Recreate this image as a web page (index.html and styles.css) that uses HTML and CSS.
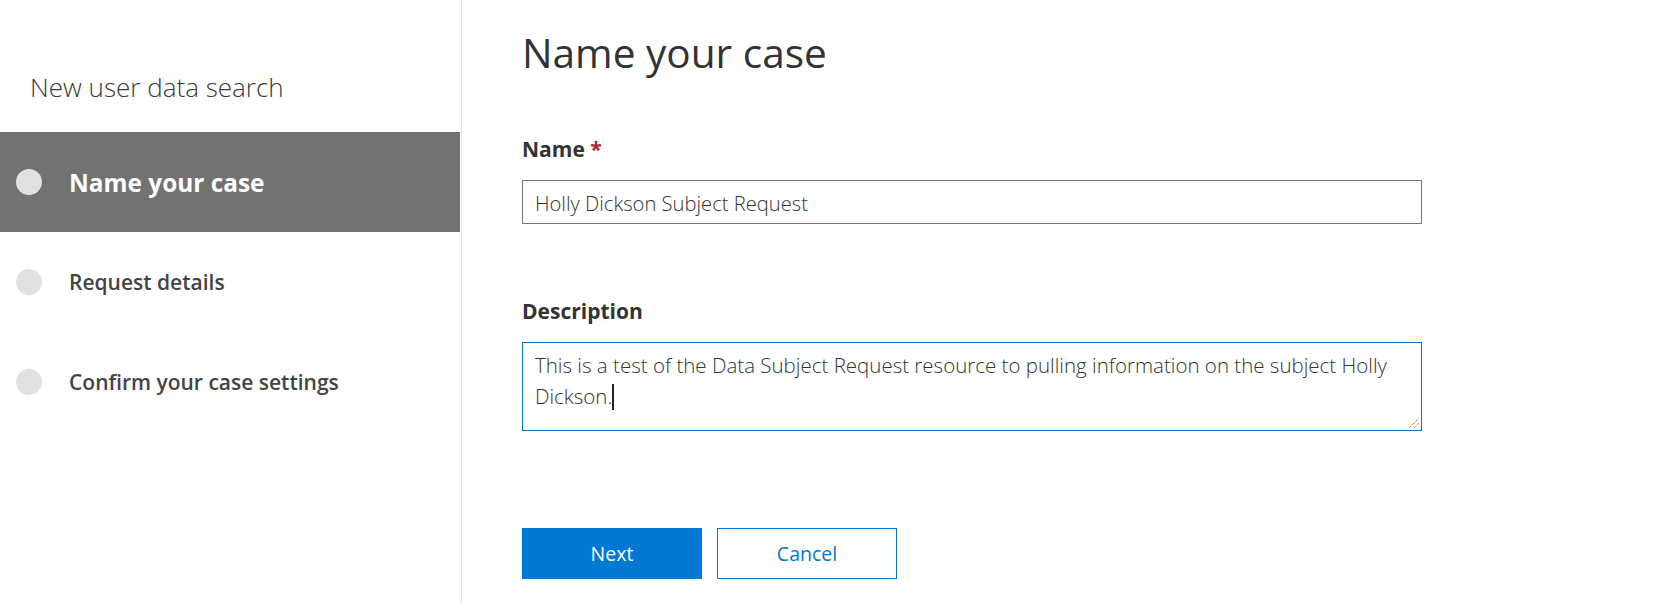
FILE: index.html
```html
<!DOCTYPE html>
<html lang="en">
<head>
<meta charset="utf-8">
<title>New user data search</title>
<link rel="stylesheet" href="styles.css">
</head>
<body>
<div class="page">
  <aside class="sidebar">
    <div class="sidebar-title">New user data search</div>
    <ul class="steps">
      <li class="step step-active"><span class="dot"></span><span class="step-label">Name your case</span></li>
      <li class="step"><span class="dot"></span><span class="step-label">Request details</span></li>
      <li class="step"><span class="dot"></span><span class="step-label">Confirm your case settings</span></li>
    </ul>
  </aside>
  <main class="main">
    <h1 class="heading">Name your case</h1>
    <div class="field field-name">
      <label class="label" for="case-name">Name <span class="req">*</span></label>
      <input class="text-input" id="case-name" type="text" value="Holly Dickson Subject Request">
    </div>
    <div class="field field-desc">
      <div class="label">Description</div>
      <div class="textarea" role="textbox" aria-multiline="true">This is a test of the Data Subject Request resource to pulling information on the subject Holly Dickson.<span class="caret"></span>
        <svg class="grip" width="12" height="12" viewBox="0 0 12 12"><path d="M1 11 L11 1 M6 11 L11 6" stroke="#555" stroke-width="1" stroke-dasharray="1 1" fill="none"/></svg>
      </div>
    </div>
    <div class="actions">
      <button class="btn btn-primary" type="button">Next</button>
      <button class="btn btn-secondary" type="button">Cancel</button>
    </div>
  </main>
</div>
</body>
</html>
```
FILE: styles.css
```css
* { box-sizing: border-box; }
html, body { margin: 0; padding: 0; background: #fff; }
body { font-family: "Open Sans", "Noto Sans", "Liberation Sans", sans-serif; color: #333; }

.page {
  display: flex;
  width: 1669px;
  height: 603px;
  overflow: hidden;
}

.sidebar {
  width: 462px;
  flex: 0 0 462px;
  border-right: 1px solid #e6e6e6;
  padding-top: 70px;
  padding-right: 1px;
}
.sidebar-title {
  font-size: 26px;
  font-weight: 300;
  line-height: 34px;
  color: #3a3a3a;
  padding-left: 30px;
  margin-bottom: 28px;
}
.steps { list-style: none; margin: 0; padding: 0; }
.step {
  height: 100px;
  display: flex;
  align-items: center;
  padding-left: 16px;
  gap: 27px;
  color: #444;
  font-size: 21px;
  font-weight: 600;
}
.dot {
  width: 26px;
  height: 26px;
  border-radius: 50%;
  background: #e1e1e1;
  flex: 0 0 26px;
}
.step-active {
  background: #727272;
  color: #fff;
  font-size: 24.4px;
  font-weight: 700;
}

.main {
  flex: 1;
  padding: 25px 0 0 60px;
}
.heading {
  margin: 0;
  font-size: 40.6px;
  font-weight: 400;
  line-height: 56px;
  color: #333;
}
.field { width: 900px; }
.label {
  display: block;
  font-size: 21px;
  font-weight: 700;
  line-height: 28px;
  color: #333;
  margin-bottom: 17px;
}
.field-name { margin-top: 54px; }
.req { color: #a4262c; }
.text-input {
  display: block;
  width: 900px;
  height: 44px;
  border: 1px solid #7a7a7a;
  border-radius: 0;
  padding: 2px 12px 0 12px;
  font-family: inherit;
  font-size: 20.2px;
  font-weight: 300;
  color: #333;
  background: #fff;
  outline: none;
}
.field-desc { margin-top: 73px; }
.textarea {
  position: relative;
  width: 900px;
  height: 89px;
  border: 1px solid #0078d4;
  padding: 7px 12px 0 12px;
  font-size: 20.5px;
  font-weight: 300;
  line-height: 31px;
  color: #333;
}
.caret {
  display: inline-block;
  width: 1.5px;
  height: 26px;
  background: #222;
  vertical-align: -6px;
}
.grip {
  position: absolute;
  right: 1px;
  bottom: 1px;
}

.actions {
  display: flex;
  gap: 15px;
  margin-top: 97px;
}
.btn {
  width: 180px;
  height: 51px;
  font-family: inherit;
  font-size: 19.5px;
  font-weight: 400;
  border-radius: 0;
  cursor: pointer;
}
.btn-primary {
  background: #0078d4;
  border: 1px solid #0078d4;
  color: #fff;
}
.btn-secondary {
  background: #fff;
  border: 1px solid #0078d4;
  color: #0078d4;
}
```
